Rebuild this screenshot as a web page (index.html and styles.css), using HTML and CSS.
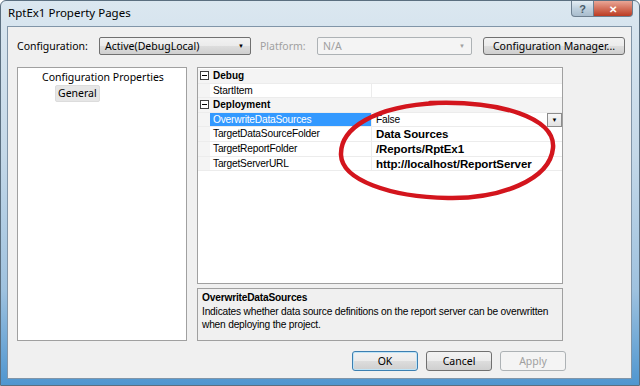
FILE: index.html
```html
<!DOCTYPE html>
<html lang="en">
<head>
  <meta charset="UTF-8">
  <title>RptEx1 Property Pages</title>
  <link rel="stylesheet" href="styles.css">
</head>
<body>
  <div class="window">
    <div class="titlebar">
      <span class="title">RptEx1 Property Pages</span>
      <div class="caption-buttons">
        <span class="cap-btn help">?</span>
        <span class="cap-btn close">&#x2715;</span>
      </div>
    </div>

    <div class="client">
      <div class="toolbar">
        <span class="label">Configuration:</span>
        <div class="combo config-combo">
          <span>Active(DebugLocal)</span>
          <span class="arrow">&#9660;</span>
        </div>
        <span class="label disabled">Platform:</span>
        <div class="combo platform-combo is-disabled">
          <span>N/A</span>
          <span class="arrow">&#9660;</span>
        </div>
        <button class="btn manager-btn">Configuration Manager...</button>
      </div>

      <div class="main">
        <div class="tree">
          <div class="tree-root">Configuration Properties</div>
          <div class="tree-item selected">General</div>
        </div>

        <div class="right-col">
          <div class="prop-grid">
            <div class="row category">
              <span class="gutter"><span class="toggle"></span></span>
              <span class="name">Debug</span>
            </div>
            <div class="row">
              <span class="gutter"></span>
              <span class="name">StartItem</span>
              <span class="value"></span>
            </div>
            <div class="row category">
              <span class="gutter"><span class="toggle"></span></span>
              <span class="name">Deployment</span>
            </div>
            <div class="row">
              <span class="gutter"></span>
              <span class="name selected">OverwriteDataSources</span>
              <span class="value">False<span class="drop-btn">&#9660;</span></span>
            </div>
            <div class="row">
              <span class="gutter"></span>
              <span class="name">TargetDataSourceFolder</span>
              <span class="value strong">Data Sources</span>
            </div>
            <div class="row">
              <span class="gutter"></span>
              <span class="name">TargetReportFolder</span>
              <span class="value strong">/Reports/RptEx1</span>
            </div>
            <div class="row">
              <span class="gutter"></span>
              <span class="name">TargetServerURL</span>
              <span class="value strong">http://localhost/ReportServer</span>
            </div>
          </div>

          <div class="description">
            <div class="desc-title">OverwriteDataSources</div>
            <div class="desc-text">Indicates whether data source definitions on the report server can be overwritten when deploying the project.</div>
          </div>
        </div>
      </div>

      <div class="buttons">
        <button class="btn default">OK</button>
        <button class="btn">Cancel</button>
        <button class="btn" disabled>Apply</button>
      </div>
    </div>

    <!-- red hand-drawn annotation round the values -->
    <svg class="annotation" width="640" height="386" viewBox="0 0 640 386">
      <path d="M430 103 C 500 100, 556 118, 553 148 C 550 180, 500 199, 448 198 C 390 197, 342 180, 341 155 C 340 128, 375 106, 438 103"
            fill="none" stroke="#d3151d" stroke-width="4.5" stroke-linecap="round"/>
    </svg>
  </div>
</body>
</html>
```

FILE: styles.css
```css
body {
  margin: 0;
  background: #ffffff;
}
.window {
  position: relative;
  width: 640px;
  height: 386px;
  box-sizing: border-box;
  border: 1px solid #5b6f80;
  border-radius: 6px 6px 0 0;
  background: linear-gradient(to bottom, #dbe7f0 0%, #c4d8e8 40%, #9fc2df 75%, #4f96d0 100%);
  font-family: "Noto Sans", "Liberation Sans", sans-serif;
  overflow: hidden;
}
.titlebar {
  height: 25px;
  display: flex;
  justify-content: space-between;
  align-items: flex-start;
}
.title {
  margin: 4px 0 0 7px;
  font-size: 11.5px;
  color: #000;
}
.caption-buttons {
  display: flex;
  margin-right: 6px;
}
.cap-btn {
  height: 15px;
  display: flex;
  align-items: center;
  justify-content: center;
  border: 1px solid #6d7f90;
  border-top: none;
  font-size: 11px;
  color: #fff;
}
.help {
  width: 21px;
  border-radius: 0 0 0 4px;
  background: linear-gradient(to bottom, #e4edf4, #bfd0de 50%, #a9bdcd);
  color: #4a5b6a;
  font-family: "Liberation Sans", sans-serif;
  font-weight: bold;
}
.close {
  width: 38px;
  border-left: none;
  border-radius: 0 0 4px 0;
  background: linear-gradient(to bottom, #e9a696, #d3705b 50%, #bb3b22);
  font-size: 10px;
  font-weight: bold;
}
.client {
  margin: 0 7px 0 6px;
  height: 353px;
  background: #f0f0f0;
  border: 1px solid #8195a8;
  box-sizing: border-box;
  display: flex;
  flex-direction: column;
  font-size: 10px;
}
.toolbar {
  display: flex;
  align-items: center;
  margin: 10px 0 0 9px;
  height: 18px;
}
.label {
  width: 82px;
  font-size: 10.5px;
}
.label.disabled {
  width: 57px;
  margin-left: 9px;
  color: #a0a0a0;
}
.combo {
  box-sizing: border-box;
  height: 18px;
  display: flex;
  align-items: center;
  justify-content: space-between;
  padding: 0 6px 0 5px;
  border: 1px solid #707070;
  border-radius: 2px;
  background: linear-gradient(to bottom, #f2f2f2 0%, #ebebeb 50%, #dddddd 51%, #cfcfcf 100%);
  font-size: 10.5px;
}
.combo .arrow {
  font-size: 6px;
}
.config-combo {
  width: 152px;
}
.platform-combo {
  width: 155px;
}
.combo.is-disabled {
  background: #f4f4f4;
  border-color: #adb2b5;
  color: #a0a0a0;
}
.btn {
  box-sizing: border-box;
  height: 18px;
  padding: 0;
  border: 1px solid #707070;
  border-radius: 3px;
  background: linear-gradient(to bottom, #f2f2f2 0%, #ebebeb 50%, #dddddd 51%, #cfcfcf 100%);
  font-family: "Noto Sans", "Liberation Sans", sans-serif;
  font-size: 10.5px;
  color: #000;
}
.btn:disabled {
  background: #f4f4f4;
  border-color: #adb2b5;
  color: #a0a0a0;
}
.btn.default {
  border-color: #3c7fb1;
  box-shadow: inset 0 0 0 1px #bfe4f7;
}
.manager-btn {
  width: 142px;
  margin-left: 11px;
}
.main {
  display: flex;
  gap: 10px;
  margin: 12px 0 0 9px;
}
.tree {
  width: 170px;
  height: 274px;
  box-sizing: border-box;
  background: #fff;
  border: 1px solid #a0a0a0;
  padding: 2px 0 0 24px;
  font-size: 10.5px;
}
.tree-root {
  height: 15px;
}
.tree-item {
  display: inline-block;
  margin-left: 13px;
  padding: 0 2px;
  height: 15px;
  line-height: 15px;
  border-radius: 2px;
}
.tree-item.selected {
  background: #e6e6e6;
  border: 1px solid #dcdcdc;
}
.right-col {
  width: 366px;
  display: flex;
  flex-direction: column;
  gap: 4px;
}
.prop-grid {
  height: 217px;
  box-sizing: border-box;
  background: #fff;
  border: 1px solid #a0a0a0;
  padding-top: 1px;
  font-family: "Liberation Sans", Arial, sans-serif;
  font-size: 10.2px;
  letter-spacing: -0.2px;
}
.row {
  display: flex;
  height: 14.6px;
  line-height: 14.6px;
}
.row > span {
  box-sizing: border-box;
  border-bottom: 1px solid #ececec;
}
.gutter {
  width: 12px;
  flex: none;
  background: #f4f4f4;
  display: flex;
  align-items: center;
  justify-content: center;
}
.toggle {
  position: relative;
  width: 9px;
  height: 9px;
  box-sizing: border-box;
  border: 1px solid #404040;
  background: #fff;
}
.toggle::after {
  content: "";
  position: absolute;
  left: 1px;
  top: 3px;
  width: 5px;
  height: 1px;
  background: #000;
}
.name {
  width: 162px;
  flex: none;
  padding-left: 3px;
  border-right: 1px solid #ececec;
}
.category .name {
  flex: 1;
  border-right: none;
  background: #f4f4f4;
  font-weight: bold;
  font-size: 10px;
  letter-spacing: 0;
}
.name.selected {
  background: #3399ff;
  color: #fff;
}
.value {
  flex: 1;
  display: flex;
  justify-content: space-between;
  padding-left: 4px;
}
.value.strong {
  font-weight: bold;
  font-size: 11.5px;
  letter-spacing: -0.1px;
}
.drop-btn {
  box-sizing: border-box;
  width: 15px;
  height: 14px;
  border: 1px solid #8c8c8c;
  background: linear-gradient(to bottom, #f8f8f8, #e2e2e2);
  font-size: 6px;
  line-height: 12px;
  text-align: center;
  letter-spacing: 0;
}
.description {
  height: 53px;
  box-sizing: border-box;
  border: 1px solid #a0a0a0;
  padding: 2px 4px;
  font-family: "Liberation Sans", Arial, sans-serif;
  font-size: 10.2px;
  letter-spacing: -0.2px;
  line-height: 13.5px;
}
.desc-title {
  font-weight: bold;
}
.desc-text {
  width: 352px;
}
.buttons {
  display: flex;
  gap: 8px;
  margin: 10px 0 0 344px;
}
.buttons .btn {
  width: 66px;
  height: 20px;
}
.annotation {
  position: absolute;
  left: -1px;
  top: -1px;
  pointer-events: none;
}
```
